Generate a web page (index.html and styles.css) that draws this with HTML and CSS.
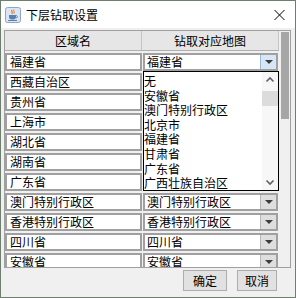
FILE: index.html
```html
<!DOCTYPE html>
<html>
<head>
<meta charset="utf-8">
<link rel="stylesheet" href="styles.css">
</head>
<body>
<div class="win">
  <div class="titlebar">
    <svg class="appicon" width="16" height="16" viewBox="0 0 16 16">
      <rect x="0.5" y="0.5" width="15" height="15" rx="2" fill="#dbe6f2" stroke="#8ea6c2"/>
      <path d="M7 3 C5.5 4.5 8.5 5 7 7" stroke="#e0762a" stroke-width="1.2" fill="none"/>
      <path d="M9 2.5 C7.8 4 10 4.6 9 6.5" stroke="#e0762a" stroke-width="1" fill="none"/>
      <path d="M4 8 H11 V10 C11 12 9.5 12.5 7.5 12.5 C5.5 12.5 4 12 4 10 Z" fill="#5a7fb0"/>
      <path d="M11 8.6 C13 8.6 13 10.8 11 10.8" stroke="#5a7fb0" stroke-width="1" fill="none"/>
      <rect x="3" y="13" width="9" height="1" fill="#5a7fb0"/>
    </svg>
    <span class="title">下层钻取设置</span>
    <svg class="close" width="11" height="10" viewBox="0 0 11 10">
      <path d="M0.5 0 L10.5 10 M10.5 0 L0.5 10" stroke="#000" stroke-width="1"/>
    </svg>
  </div>
  <div class="content">
    <div class="pane">
      <div class="viewport">
        <div class="header">
          <div class="hc h1">区域名</div>
          <div class="hc h2">钻取对应地图</div>
        </div>
        <div class="row"><div class="cell">福建省</div><div class="combo"><span class="ctext">福建省</span><span class="cbtn active"><i class="tri"></i></span></div></div>
        <div class="row"><div class="cell">西藏自治区</div><div class="combo"><span class="ctext"></span><span class="cbtn"><i class="tri"></i></span></div></div>
        <div class="row"><div class="cell">贵州省</div><div class="combo"><span class="ctext"></span><span class="cbtn"><i class="tri"></i></span></div></div>
        <div class="row"><div class="cell">上海市</div><div class="combo"><span class="ctext"></span><span class="cbtn"><i class="tri"></i></span></div></div>
        <div class="row"><div class="cell">湖北省</div><div class="combo"><span class="ctext"></span><span class="cbtn"><i class="tri"></i></span></div></div>
        <div class="row"><div class="cell">湖南省</div><div class="combo"><span class="ctext"></span><span class="cbtn"><i class="tri"></i></span></div></div>
        <div class="row"><div class="cell">广东省</div><div class="combo"><span class="ctext"></span><span class="cbtn"><i class="tri"></i></span></div></div>
        <div class="row"><div class="cell">澳门特别行政区</div><div class="combo"><span class="ctext">澳门特别行政区</span><span class="cbtn"><i class="tri"></i></span></div></div>
        <div class="row"><div class="cell">香港特别行政区</div><div class="combo"><span class="ctext">香港特别行政区</span><span class="cbtn"><i class="tri"></i></span></div></div>
        <div class="row"><div class="cell">四川省</div><div class="combo"><span class="ctext">四川省</span><span class="cbtn"><i class="tri"></i></span></div></div>
        <div class="row"><div class="cell">安徽省</div><div class="combo"><span class="ctext">安徽省</span><span class="cbtn"><i class="tri"></i></span></div></div>

        <div class="popup">
          <div class="plist">
            <div class="pitem">无</div>
            <div class="pitem">安徽省</div>
            <div class="pitem">澳门特别行政区</div>
            <div class="pitem">北京市</div>
            <div class="pitem">福建省</div>
            <div class="pitem">甘肃省</div>
            <div class="pitem">广东省</div>
            <div class="pitem">广西壮族自治区</div>
          </div>
          <div class="pscroll">
            <svg class="chev" width="16" height="16" viewBox="0 0 16 16"><path d="M4.5 9.5 L8 6 L11.5 9.5" stroke="#606060" stroke-width="1.6" fill="none"/></svg>
            <div class="pthumb"></div>
            <div class="pfill"></div>
            <svg class="chev" width="16" height="16" viewBox="0 0 16 16"><path d="M4.5 6.5 L8 10 L11.5 6.5" stroke="#606060" stroke-width="1.6" fill="none"/></svg>
          </div>
        </div>
      </div>
      <div class="vscroll"><div class="vthumb"></div></div>
    </div>
    <div class="buttons">
      <button class="btn ok">确定</button>
      <button class="btn cancel">取消</button>
    </div>
  </div>
</div>
</body>
</html>
```

FILE: styles.css
```css
* { box-sizing: border-box; }
html, body { margin: 0; padding: 0; }
body {
  width: 296px;
  height: 298px;
  overflow: hidden;
  font-family: "Noto Sans CJK SC", "DejaVu Sans", sans-serif;
  font-size: 12px;
  color: #000;
}
.win {
  width: 296px;
  height: 298px;
  border: 1px solid #6f7f6f;
  display: flex;
  flex-direction: column;
  background: #f0f0f0;
}
.titlebar {
  height: 27px;
  flex: none;
  background: #fff;
  display: flex;
  align-items: center;
  padding-left: 4px;
  position: relative;
}
.appicon { flex: none; display: block; }
.title {
  margin-left: 5px;
  font-size: 12px;
  line-height: 14px;
  padding-top: 1px;
}
.close {
  margin-left: auto;
  margin-right: 10px;
  display: block;
}
.content {
  flex: 1;
  padding: 2px 18px 0 3px;
  display: flex;
  flex-direction: column;
}
.pane {
  width: 287px;
  height: 238px;
  border: 1px solid #a0a0a0;
  display: flex;
  background: #f0f0f0;
}
.viewport {
  width: 275px;
  height: 236px;
  overflow: hidden;
  position: relative;
}
.header {
  display: flex;
  height: 20px;
  background: #e6e6e6;
  border-bottom: 1px solid #b0b0b0;
  width: 274px;
}
.hc {
  height: 19px;
  line-height: 19px;
  text-align: center;
  font-size: 12px;
}
.h1 { width: 137px; border-right: 1px solid #c4c4c4; }
.h2 { width: 137px; border-right: 1px solid #c4c4c4; }
.row {
  display: grid;
  grid-template-columns: 137px 135px;
  column-gap: 1px;
  height: 20px;
  padding-top: 2px;
}
.cell, .combo {
  height: 18px;
  border: 2px solid #a0a0a0;
  background: #fff;
  font-size: 12px;
  line-height: 14px;
  white-space: nowrap;
}
.cell { padding-left: 3px; }
.combo {
  display: flex;
}
.ctext {
  flex: 1;
  padding-left: 2px;
}
.cbtn {
  width: 16px;
  flex: none;
  background: #dedede;
  border-left: 1px solid #b8b8b8;
  display: flex;
  align-items: center;
  justify-content: center;
}
.cbtn.active {
  background: #d6e6f6;
  border-left: 1px solid #9ab8d8;
}
.tri {
  width: 0;
  height: 0;
  border-left: 4px solid transparent;
  border-right: 4px solid transparent;
  border-top: 4px solid #3c3c3c;
}
.popup {
  position: absolute;
  left: 138px;
  top: 40px;
  width: 136px;
  height: 120px;
  border: 1px solid #000;
  background: #fff;
  display: flex;
  overflow: hidden;
}
.plist {
  flex: 1;
  padding-top: 2px;
  overflow: hidden;
}
.pitem {
  height: 14.6px;
  line-height: 14.6px;
  font-size: 12px;
  white-space: nowrap;
  padding-left: 0;
}
.pscroll {
  width: 16px;
  flex: none;
  background: #f7f7f7;
  display: flex;
  flex-direction: column;
}
.chev { display: block; flex: none; }
.pthumb {
  height: 15px;
  margin-top: 3px;
  background: #dcdcdc;
  flex: none;
}
.pfill { flex: 1; }
.vscroll {
  width: 10px;
  height: 236px;
  background: #f0f0f0;
  padding: 1px 1px 0 1px;
}
.vthumb {
  width: 8px;
  height: 87px;
  background: #a6a6a6;
}
.buttons {
  display: flex;
  justify-content: flex-end;
  gap: 10px;
  margin-top: 2px;
}
.btn {
  height: 21px;
  padding: 0;
  margin: 0;
  background: #e1e1e1;
  border: 1px solid #adadad;
  font-family: "Noto Sans CJK SC", "DejaVu Sans", sans-serif;
  font-size: 12px;
  line-height: 19px;
  color: #000;
}
.ok { width: 44px; }
.cancel { width: 40px; }
```
